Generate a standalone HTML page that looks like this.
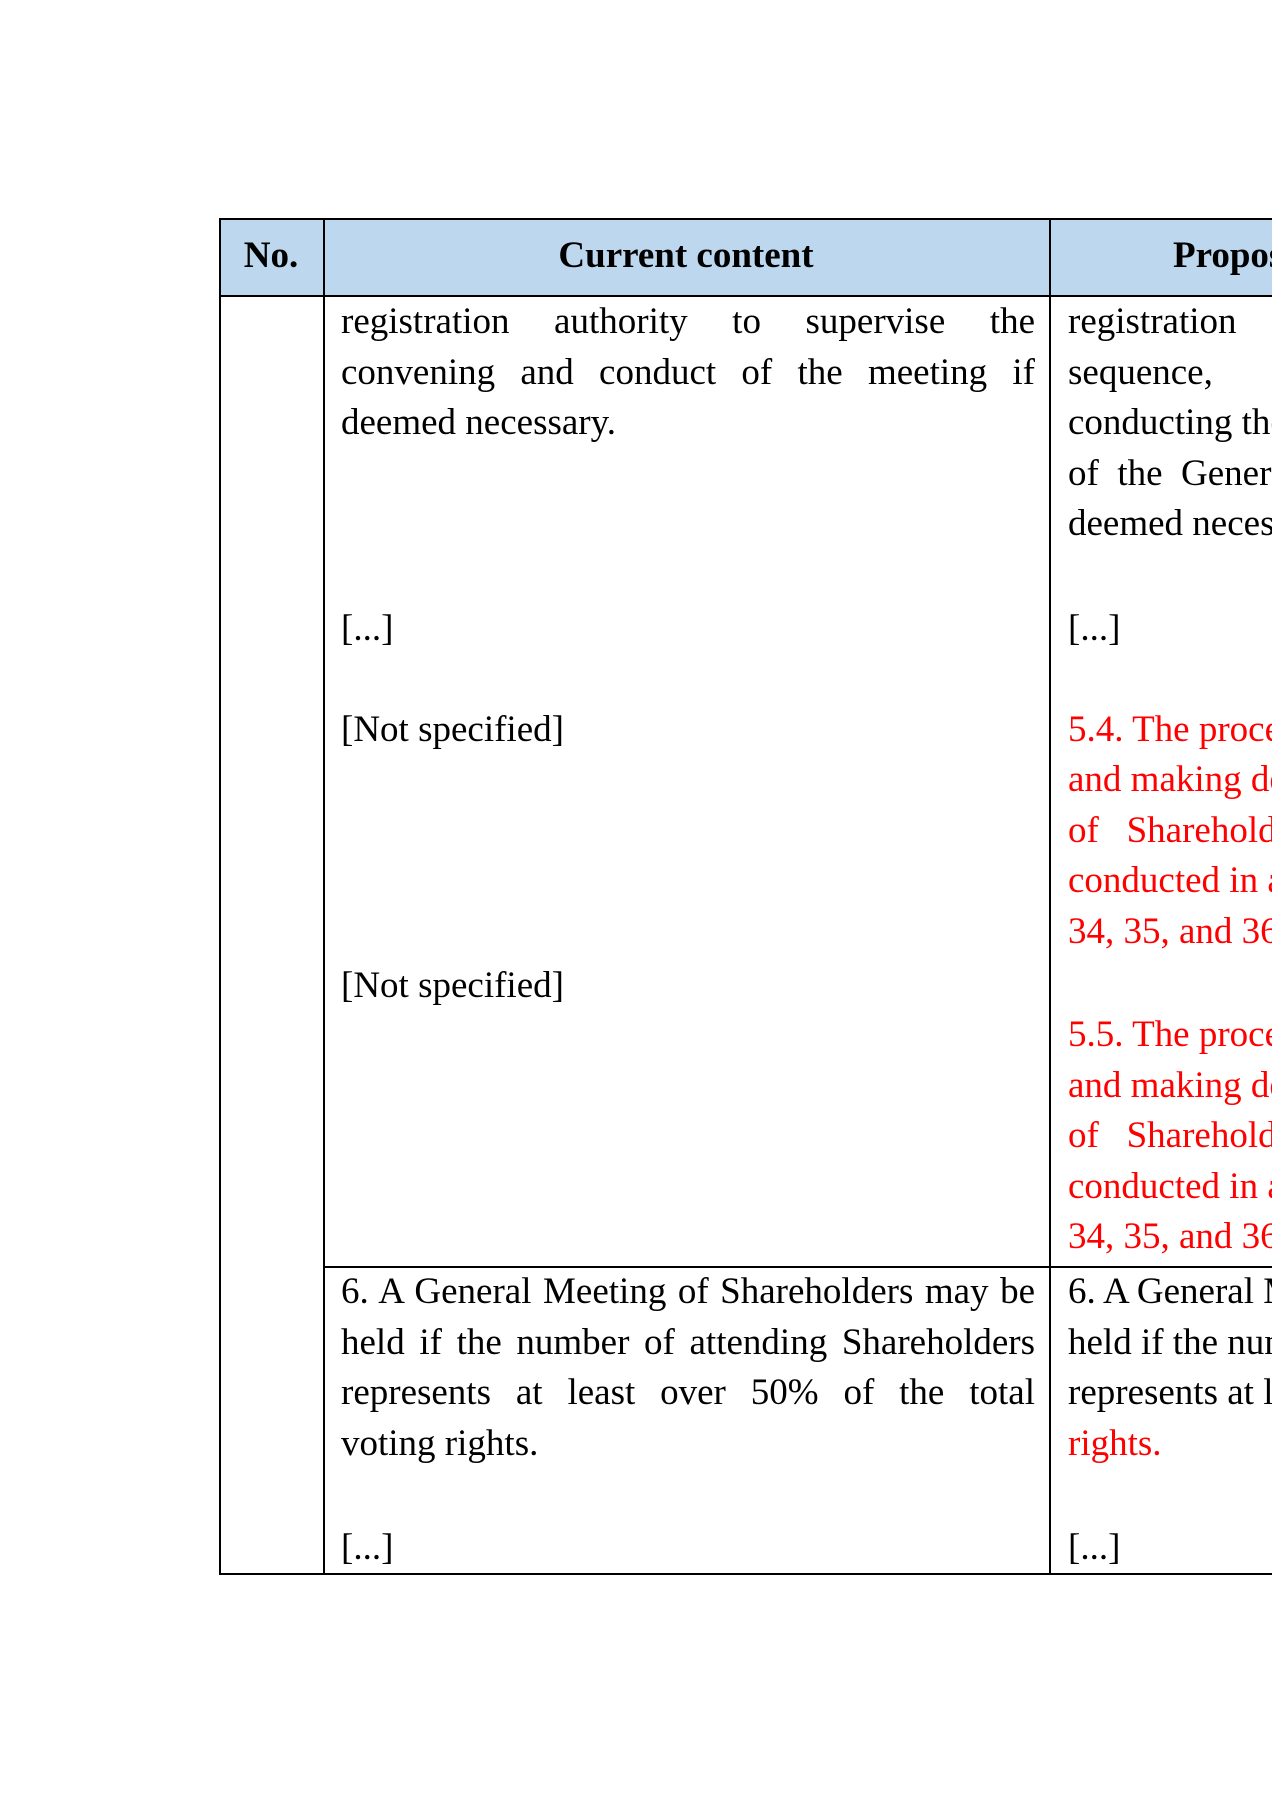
<!DOCTYPE html>
<html><head><meta charset="utf-8"><style>
html,body{margin:0;padding:0;width:1272px;height:1800px;overflow:hidden;background:#fff;}
#w{position:relative;width:1272px;height:1800px;overflow:hidden;font-family:"Liberation Serif",serif;font-size:37px;color:#000;}
.hdr{position:absolute;left:219px;top:218px;width:1053px;height:78px;background:#bdd7ee;}
.v{position:absolute;background:#000;width:1.5px;}
.h{position:absolute;background:#000;height:1.5px;}
.l{position:absolute;height:51px;line-height:51px;white-space:nowrap;}
.j{width:694px;text-align:justify;text-align-last:justify;white-space:normal;overflow:hidden;}
.rc{position:absolute;left:1068px;top:0;width:204px;height:1800px;overflow:hidden;}
.rc .l{left:0;}
.r{color:#f00;}
.b{font-weight:bold;}
</style></head><body><div id="w">
<div class="hdr"></div>
<div class="h" style="left:219px;top:218px;width:1053px;height:2px"></div>
<div class="h" style="left:219px;top:295px;width:1053px;height:2px"></div>
<div class="h" style="left:323px;top:1266px;width:949px"></div>
<div class="h" style="left:219px;top:1573px;width:1053px;height:2px"></div>
<div class="v" style="left:219px;top:218px;height:1357px"></div>
<div class="v" style="left:323px;top:218px;height:1357px"></div>
<div class="v" style="left:1049px;top:218px;height:1357px"></div>

<div class="l b" style="left:219px;width:104px;text-align:center;top:230px">No.</div>
<div class="l b" style="left:323px;width:726px;text-align:center;top:230px">Current content</div>

<div class="l j" style="left:341px;top:296px">registration authority to supervise the</div>
<div class="l j" style="left:341px;top:347px">convening and conduct of the meeting if</div>
<div class="l" style="left:341px;top:397px">deemed necessary.</div>
<div class="l" style="left:341px;top:603px">[...]</div>
<div class="l" style="left:341px;top:704px">[Not specified]</div>
<div class="l" style="left:341px;top:960px">[Not specified]</div>
<div class="l j" style="left:341px;top:1266px">6. A General Meeting of Shareholders may be</div>
<div class="l j" style="left:341px;top:1317px">held if the number of attending Shareholders</div>
<div class="l j" style="left:341px;top:1367px">represents at least over 50% of the total</div>
<div class="l" style="left:341px;top:1418px">voting rights.</div>
<div class="l" style="left:341px;top:1522px">[...]</div>

<div class="rc">
<div class="l b" style="left:105px;top:230px">Proposed</div>
<div class="l" style="top:296px">registration</div>
<div class="l" style="top:347px">sequence,</div>
<div class="l" style="top:397px">conducting the meeting</div>
<div class="l" style="top:448px">of&nbsp; the&nbsp; General Meeting</div>
<div class="l" style="top:498px">deemed necessary.</div>
<div class="l" style="top:603px">[...]</div>
<div class="l r" style="top:704px">5.4. The procedures for</div>
<div class="l r" style="top:754px">and making decisions</div>
<div class="l r" style="top:805px">of&nbsp;&nbsp; Shareholders</div>
<div class="l r" style="top:855px">conducted in accordance</div>
<div class="l r" style="top:906px">34, 35, and 36</div>
<div class="l r" style="top:1009px">5.5. The procedures for</div>
<div class="l r" style="top:1060px">and making decisions</div>
<div class="l r" style="top:1110px">of&nbsp;&nbsp; Shareholders</div>
<div class="l r" style="top:1161px">conducted in accordance</div>
<div class="l r" style="top:1211px">34, 35, and 36</div>
<div class="l" style="top:1266px">6. A General Meeting</div>
<div class="l" style="top:1317px">held if the number</div>
<div class="l" style="top:1367px">represents at least</div>
<div class="l r" style="top:1418px">rights.</div>
<div class="l" style="top:1522px">[...]</div>
</div>
</div></body></html>
